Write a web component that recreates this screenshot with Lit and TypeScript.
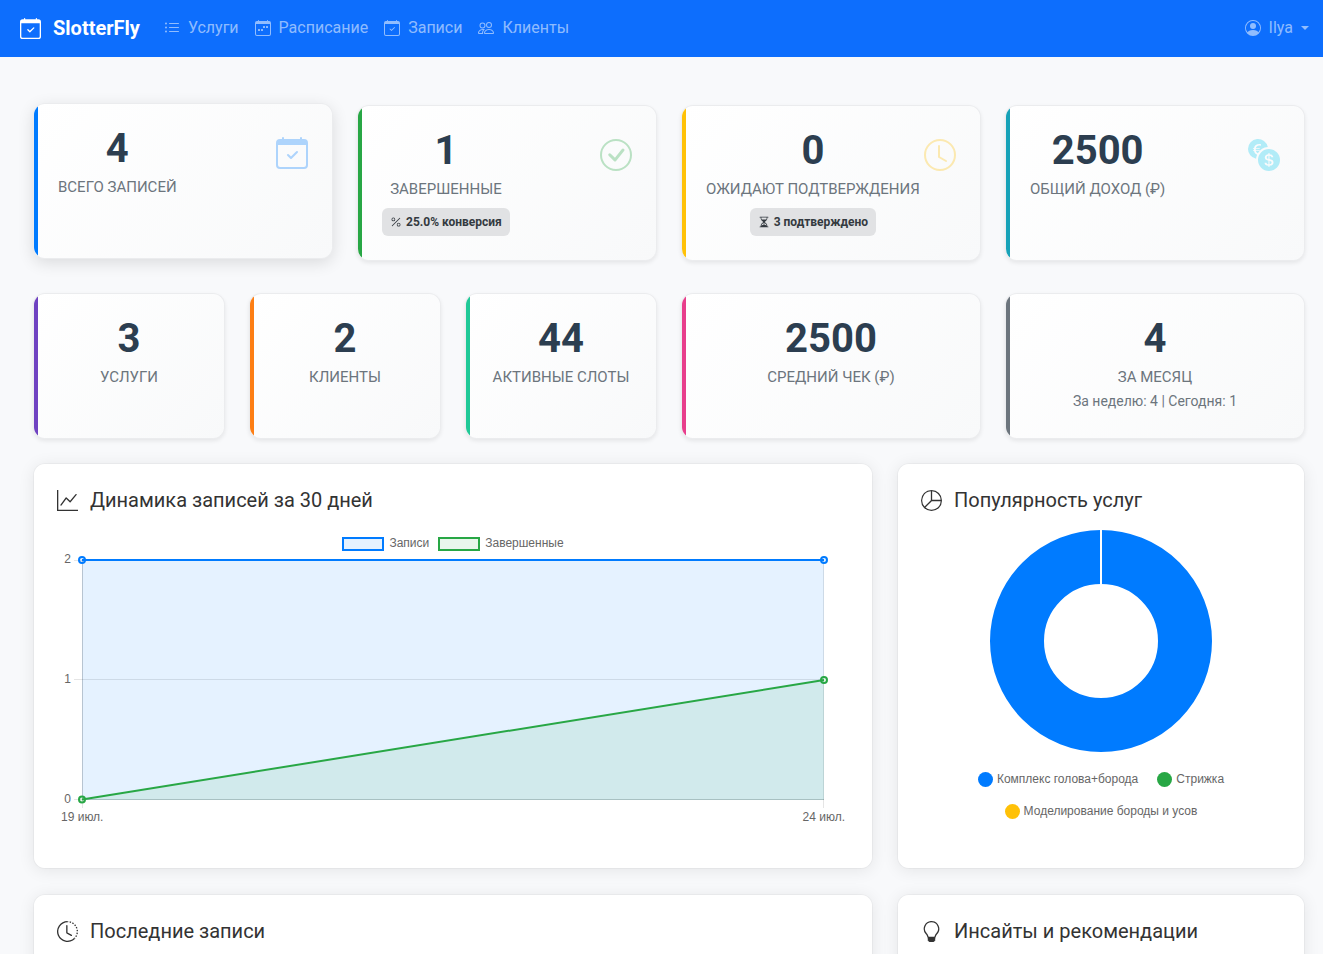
import { LitElement, html, svg, css } from "lit";
import { customElement } from "lit/decorators.js";
import { classMap } from "lit/directives/class-map.js";

type Icon = { d: string[]; evenodd?: boolean };

const ICONS: Record<string, Icon> = {
  calendarCheck: { d: [
    "M10.854 7.146a.5.5 0 0 1 0 .708l-3 3a.5.5 0 0 1-.708 0l-1.5-1.5a.5.5 0 1 1 .708-.708L7.5 9.793l2.646-2.647a.5.5 0 0 1 .708 0z",
    "M3.5 0a.5.5 0 0 1 .5.5V1h8V.5a.5.5 0 0 1 1 0V1h1a2 2 0 0 1 2 2v11a2 2 0 0 1-2 2H2a2 2 0 0 1-2-2V3a2 2 0 0 1 2-2h1V.5a.5.5 0 0 1 .5-.5zM1 4v10a1 1 0 0 0 1 1h12a1 1 0 0 0 1-1V4H1z",
  ] },
  calendarWeek: { d: [
    "M11 6.5a.5.5 0 0 1 .5-.5h1a.5.5 0 0 1 .5.5v1a.5.5 0 0 1-.5.5h-1a.5.5 0 0 1-.5-.5v-1zm-3 0a.5.5 0 0 1 .5-.5h1a.5.5 0 0 1 .5.5v1a.5.5 0 0 1-.5.5h-1a.5.5 0 0 1-.5-.5v-1zm-5 3a.5.5 0 0 1 .5-.5h1a.5.5 0 0 1 .5.5v1a.5.5 0 0 1-.5.5h-1a.5.5 0 0 1-.5-.5v-1zm3 0a.5.5 0 0 1 .5-.5h1a.5.5 0 0 1 .5.5v1a.5.5 0 0 1-.5.5h-1a.5.5 0 0 1-.5-.5v-1z",
    "M3.5 0a.5.5 0 0 1 .5.5V1h8V.5a.5.5 0 0 1 1 0V1h1a2 2 0 0 1 2 2v11a2 2 0 0 1-2 2H2a2 2 0 0 1-2-2V3a2 2 0 0 1 2-2h1V.5a.5.5 0 0 1 .5-.5zM1 4v10a1 1 0 0 0 1 1h12a1 1 0 0 0 1-1V4H1z",
  ] },
  list: { d: [
    "M5 11.5a.5.5 0 0 1 .5-.5h9a.5.5 0 0 1 0 1h-9a.5.5 0 0 1-.5-.5zm0-4a.5.5 0 0 1 .5-.5h9a.5.5 0 0 1 0 1h-9a.5.5 0 0 1-.5-.5zm0-4a.5.5 0 0 1 .5-.5h9a.5.5 0 0 1 0 1h-9a.5.5 0 0 1-.5-.5zm-3 1a1 1 0 1 0 0-2 1 1 0 0 0 0 2zm0 4a1 1 0 1 0 0-2 1 1 0 0 0 0 2zm0 4a1 1 0 1 0 0-2 1 1 0 0 0 0 2z",
  ], evenodd: true },
  people: { d: [
    "M15 14s1 0 1-1-1-4-5-4-5 3-5 4 1 1 1 1h8Zm-7.978-1A.261.261 0 0 1 7 12.996c.001-.264.167-1.03.76-1.72C8.312 10.629 9.282 10 11 10c1.717 0 2.687.63 3.24 1.276.593.69.758 1.457.76 1.72l-.008.002a.274.274 0 0 1-.014.002H7.022ZM11 7a2 2 0 1 0 0-4 2 2 0 0 0 0 4Zm3-2a3 3 0 1 1-6 0 3 3 0 0 1 6 0ZM6.936 9.28a5.88 5.88 0 0 0-1.23-.247A7.35 7.35 0 0 0 5 9c-4 0-5 3-5 4 0 .667.333 1 1 1h4.216A2.238 2.238 0 0 1 5 13c0-1.01.377-2.042 1.09-2.904.243-.294.526-.569.846-.816ZM4.92 10A5.493 5.493 0 0 0 4 13H1c0-.26.164-1.03.76-1.724.545-.636 1.492-1.256 3.16-1.275ZM1.5 5.5a3 3 0 1 1 6 0 3 3 0 0 1-6 0Zm3-2a2 2 0 1 0 0 4 2 2 0 0 0 0-4Z",
  ] },
  person: { d: [
    "M11 6a3 3 0 1 1-6 0 3 3 0 0 1 6 0z",
    "M0 8a8 8 0 1 1 16 0A8 8 0 0 1 0 8zm8-7a7 7 0 0 0-5.468 11.37C3.242 11.226 4.805 10 8 10s4.757 1.225 5.468 2.37A7 7 0 0 0 8 1z",
  ], evenodd: true },
  checkCircle: { d: [
    "M8 15A7 7 0 1 1 8 1a7 7 0 0 1 0 14zm0 1A8 8 0 1 0 8 0a8 8 0 0 0 0 16z",
    "M10.97 4.97a.235.235 0 0 0-.02.022L7.477 9.417 5.384 7.323a.75.75 0 0 0-1.06 1.06L6.97 11.03a.75.75 0 0 0 1.079-.02l3.992-4.99a.75.75 0 0 0-1.071-1.05z",
  ] },
  clock: { d: [
    "M8 3.5a.5.5 0 0 0-1 0V9a.5.5 0 0 0 .252.434l3.5 2a.5.5 0 0 0 .496-.868L8 8.71V3.5z",
    "M8 16A8 8 0 1 0 8 0a8 8 0 0 0 0 16zm7-8A7 7 0 1 1 1 8a7 7 0 0 1 14 0z",
  ] },
  exchange: { d: [
    "M0 5a5.002 5.002 0 0 0 4.027 4.905 6.46 6.46 0 0 1 .544-2.073C3.695 7.536 3.132 6.864 3 5.91h-.5v-.426h.466V5.05c0-.046 0-.093.004-.135H2.5v-.427h.511C3.236 3.24 4.213 2.5 5.681 2.5c.316 0 .59.031.819.085v.733a3.46 3.46 0 0 0-.815-.082c-.919 0-1.538.466-1.734 1.252h1.917v.427h-1.98c-.003.046-.003.097-.003.147v.422h1.983v.427H3.93c.118.602.468 1.03 1.005 1.229a6.5 6.5 0 0 1 4.97-3.113A5.002 5.002 0 0 0 0 5zm16 5.5a5.5 5.5 0 1 1-11 0 5.5 5.5 0 0 1 11 0zm-7.75 1.322c.069.835.746 1.485 1.964 1.562V14h.54v-.62c1.259-.086 1.996-.74 1.996-1.69 0-.865-.563-1.31-1.57-1.54l-.426-.1V8.374c.54.06.884.347.966.745h.948c-.07-.804-.779-1.433-1.914-1.502V7h-.54v.629c-1.076.103-1.808.732-1.808 1.622 0 .787.544 1.288 1.45 1.493l.358.085v1.78c-.554-.08-.92-.376-1.003-.787H8.25zm1.96-1.895c-.532-.12-.82-.364-.82-.732 0-.41.311-.719.824-.809v1.54h-.005zm.622 1.044c.645.145.943.38.943.796 0 .474-.37.8-1.02.86v-1.674l.077.018z",
  ] },
  percent: { d: [
    "M13.442 2.558a.625.625 0 0 1 0 .884l-10 10a.625.625 0 1 1-.884-.884l10-10a.625.625 0 0 1 .884 0zM4.5 6a1.5 1.5 0 1 1 0-3 1.5 1.5 0 0 1 0 3zm0 1a2.5 2.5 0 1 0 0-5 2.5 2.5 0 0 0 0 5zm7 6a1.5 1.5 0 1 1 0-3 1.5 1.5 0 0 1 0 3zm0 1a2.5 2.5 0 1 0 0-5 2.5 2.5 0 0 0 0 5z",
  ] },
  hourglass: { d: [
    "M2.5 15a.5.5 0 1 1 0-1h1v-1a4.5 4.5 0 0 1 2.557-4.06c.29-.139.443-.377.443-.59v-.7c0-.213-.154-.451-.443-.59A4.5 4.5 0 0 1 3.5 3V2h-1a.5.5 0 0 1 0-1h11a.5.5 0 0 1 0 1h-1v1a4.5 4.5 0 0 1-2.557 4.06c-.29.139-.443.377-.443.59v.7c0 .213.154.451.443.59A4.5 4.5 0 0 1 12.5 13v1h1a.5.5 0 0 1 0 1h-11zm2-13v1c0 .537.12 1.045.337 1.5h6.326c.216-.455.337-.963.337-1.5V2h-7zm3 6.35c0 .701-.478 1.236-1.011 1.492A3.5 3.5 0 0 0 4.5 13s.866-1.299 3-1.48V8.35zm1 0v3.17c2.134.181 3 1.48 3 1.48a3.5 3.5 0 0 0-1.989-3.158C8.978 9.586 8.5 9.052 8.5 8.351z",
  ] },
  graph: { d: [
    "M0 0h1v15h15v1H0V0Zm14.817 3.113a.5.5 0 0 1 .07.704l-4.5 5.5a.5.5 0 0 1-.74.037L7.06 6.767l-3.656 5.027a.5.5 0 0 1-.808-.588l4-5.5a.5.5 0 0 1 .758-.06l2.609 2.61 4.15-5.073a.5.5 0 0 1 .704-.07Z",
  ], evenodd: true },
  pie: { d: [
    "M7.5 1.018a7 7 0 0 0-4.79 11.566L7.5 7.793V1.018zm1 0V7.5h6.482A7.001 7.001 0 0 0 8.5 1.018zM14.982 8.5H8.207l-4.79 4.79A7 7 0 0 0 14.982 8.5zM0 8a8 8 0 1 1 16 0A8 8 0 0 1 0 8z",
  ], evenodd: true },
  history: { d: [
    "M8.515 1.019A7 7 0 0 0 8 1V0a8 8 0 0 1 .589.022l-.074.997zm2.004.45a7.003 7.003 0 0 0-.985-.299l.219-.976c.383.086.76.2 1.126.342l-.36.933zm1.37.71a7.01 7.01 0 0 0-.439-.27l.493-.87a8.025 8.025 0 0 1 .979.654l-.615.789a6.996 6.996 0 0 0-.418-.302zm1.834 1.79a6.99 6.99 0 0 0-.653-.796l.724-.69c.27.285.52.59.747.91l-.818.576zm.744 1.352a7.08 7.08 0 0 0-.214-.468l.893-.45a7.976 7.976 0 0 1 .45 1.088l-.95.313a7.023 7.023 0 0 0-.179-.483zm.53 2.507a6.991 6.991 0 0 0-.1-1.025l.985-.17c.067.386.106.778.116 1.17l-1 .025zm-.131 1.538c.033-.17.06-.339.081-.51l.993.123a7.957 7.957 0 0 1-.23 1.155l-.964-.267c.046-.165.086-.332.12-.501zm-.952 2.379c.184-.29.346-.594.486-.908l.914.405c-.16.36-.345.706-.555 1.038l-.845-.535zm-.964 1.205c.122-.122.239-.248.35-.378l.758.653a8.073 8.073 0 0 1-.401.432l-.707-.707z",
    "M8 1a7 7 0 1 0 4.95 11.95l.707.707A8.001 8.001 0 1 1 8 0v1z",
    "M7.5 3a.5.5 0 0 1 .5.5v5.21l3.248 1.856a.5.5 0 0 1-.496.868l-3.5-2A.5.5 0 0 1 7 9V3.5a.5.5 0 0 1 .5-.5z",
  ] },
  bulb: { d: [
    "M2 6a6 6 0 1 1 10.174 4.31c-.203.196-.359.4-.453.619l-.762 1.769A.5.5 0 0 1 10.5 13a.5.5 0 0 1 0 1 .5.5 0 0 1 0 1l-.224.447a1 1 0 0 1-.894.553H6.618a1 1 0 0 1-.894-.553L5.5 15a.5.5 0 0 1 0-1 .5.5 0 0 1 0-1 .5.5 0 0 1-.46-.302l-.761-1.77a1.964 1.964 0 0 0-.453-.618A5.984 5.984 0 0 1 2 6zm6-5a5 5 0 0 0-3.479 8.592c.263.254.514.564.676.941L5.83 12h4.342l.632-1.467c.162-.377.413-.687.676-.941A5 5 0 0 0 8 1z",
  ] },
};

const icon = (name: string, cls: string) => {
  const { d, evenodd } = ICONS[name];
  return html`<svg class=${cls} viewBox="0 0 16 16" fill="currentColor" aria-hidden="true">
    ${d.map((p) => svg`<path fill-rule=${evenodd ? "evenodd" : "nonzero"} d=${p}></path>`)}
  </svg>`;
};

const NAV = [
  { icon: "list", text: "Услуги", href: "#services" },
  { icon: "calendarWeek", text: "Расписание", href: "#schedule" },
  { icon: "calendarCheck", text: "Записи", href: "#bookings" },
  { icon: "people", text: "Клиенты", href: "#clients" },
];

type Stat = {
  value: string; label: string; tone: string; icon?: string;
  badge?: { icon: string; text: string }; note?: string; raised?: boolean; wide?: boolean;
};

const MAIN_STATS: Stat[] = [
  { value: "4", label: "Всего записей", tone: "blue", icon: "calendarCheck", raised: true },
  { value: "1", label: "Завершенные", tone: "green", icon: "checkCircle", badge: { icon: "percent", text: "25.0% конверсия" } },
  { value: "0", label: "Ожидают подтверждения", tone: "yellow", icon: "clock", badge: { icon: "hourglass", text: "3 подтверждено" } },
  { value: "2500", label: "Общий доход (₽)", tone: "cyan", icon: "exchange" },
];

const EXTRA_STATS: Stat[] = [
  { value: "3", label: "Услуги", tone: "purple" },
  { value: "2", label: "Клиенты", tone: "orange" },
  { value: "44", label: "Активные слоты", tone: "teal" },
  { value: "2500", label: "Средний чек (₽)", tone: "pink", wide: true },
  { value: "4", label: "За месяц", tone: "gray", wide: true, note: "За неделю: 4 | Сегодня: 1" },
];

@customElement("site-nav")
export class SiteNav extends LitElement {
  static styles = css`
    :host { display: block; }
    .bar {
      display: flex; align-items: center; height: 57px; padding: 0 14px 1px 20px;
      box-sizing: border-box; background: #0d6efd;
      font: 16px/24px Roboto, sans-serif;
    }
    a { text-decoration: none; }
    .brand { display: flex; align-items: center; gap: 12px; color: #fff; font-size: 20px; font-weight: 700; margin-right: 24px; }
    .brand-icon { width: 21px; height: 21px; }
    .links { display: flex; gap: 16px; flex: 1; margin: 0; padding: 0; list-style: none; }
    .link, .user { display: flex; align-items: center; gap: 8px; color: rgba(255, 255, 255, 0.55); }
    .user { border: 0; padding: 0; background: none; font: inherit; cursor: pointer; }
    .icon { width: 16px; height: 16px; }
    .caret { border: 4px solid transparent; border-top-color: currentColor; border-bottom: 0; }
  `;
  render() {
    return html`<nav class="bar">
      <a class="brand" href="#home">${icon("calendarCheck", "brand-icon")}<span>SlotterFly</span></a>
      <ul class="links">
        ${NAV.map((n) => html`<li><a class="link" href=${n.href}>${icon(n.icon, "icon")}<span>${n.text}</span></a></li>`)}
      </ul>
      <button class="user" type="button" aria-haspopup="true">
        ${icon("person", "icon")}<span>Ilya</span><span class="caret"></span>
      </button>
    </nav>`;
  }
}

@customElement("line-chart")
export class LineChart extends LitElement {
  static styles = css`
    :host { display: block; font: 12px/14px "Liberation Sans", Arial, sans-serif; color: #666; }
    .legend { display: flex; justify-content: center; gap: 9px; padding: 9px 0; }
    .item { display: flex; align-items: center; gap: 5px; height: 14px; }
    .name { margin-top: -2px; }
    .swatch { width: 42px; height: 14px; box-sizing: border-box; border: 2px solid; }
    .all { border-color: #007bff; background: rgba(0, 123, 255, 0.1); }
    .done { border-color: #28a745; background: rgba(40, 167, 69, 0.1); }
    .body { display: grid; grid-template-columns: 25px 1fr 25px; }
    .y { display: flex; flex-direction: column; justify-content: space-between; margin: -8px 11px -6px 0; text-align: right; }
    .plot { display: block; width: 100%; height: 240px; overflow: visible; }
    .x { display: flex; justify-content: space-between; padding: 10px 4px 20px; }
    .grid { stroke: rgba(0, 0, 0, 0.1); }
    .axis { stroke: rgba(0, 0, 0, 0.2); }
    .line { stroke-width: 2; }
    .s-all { stroke: #007bff; fill: rgba(0, 123, 255, 0.1); }
    .s-done { stroke: #28a745; fill: rgba(40, 167, 69, 0.1); }
    .area { stroke: none; }
  `;
  render() {
    return html`
      <div class="legend">
        <div class="item"><span class="swatch all"></span><span class="name">Записи</span></div>
        <div class="item"><span class="swatch done"></span><span class="name">Завершенные</span></div>
      </div>
      <div class="body">
        <div class="y"><span>2</span><span>1</span><span>0</span></div>
        <svg class="plot" role="img" aria-label="Динамика записей за 30 дней">
          <line class="grid" x1="-8" y1="0.5" x2="100%" y2="0.5"></line>
          <line class="grid" x1="-8" y1="119.5" x2="100%" y2="119.5"></line>
          <line class="grid" x1="-8" y1="239.5" x2="0" y2="239.5"></line>
          <line class="axis" x1="0" y1="239.5" x2="100%" y2="239.5"></line>
          <line class="axis" x1="0.5" y1="0" x2="0.5" y2="240"></line>
          <line class="grid" x1="0.5" y1="240" x2="0.5" y2="248"></line>
          <svg width="100%" height="248" viewBox="0 0 742 248" preserveAspectRatio="xMaxYMin">
            <line class="grid" x1="741.5" y1="0" x2="741.5" y2="248"></line>
          </svg>
          <rect class="s-all area" x="0" y="0" width="100%" height="240"></rect>
          <svg width="100%" height="240" viewBox="0 0 100 100" preserveAspectRatio="none">
            <path class="s-done area" d="M0 100 100 50V100Z"></path>
          </svg>
          <line class="s-all line" x1="0" y1="0" x2="100%" y2="0"></line>
          <line class="s-done line" x1="0" y1="239.5" x2="100%" y2="120"></line>
          <circle class="s-all line" cx="0" cy="0" r="3"></circle>
          <circle class="s-all line" cx="100%" cy="0" r="3"></circle>
          <circle class="s-done line" cx="0" cy="239.5" r="3"></circle>
          <circle class="s-done line" cx="100%" cy="120" r="3"></circle>
        </svg>
      </div>
      <div class="x"><span>19 июл.</span><span>24 июл.</span></div>
    `;
  }
}

@customElement("donut-chart")
export class DonutChart extends LitElement {
  static styles = css`
    :host { display: block; padding-top: 2px; font: 12px/14px "Liberation Sans", Arial, sans-serif; color: #666; }
    .ring { display: block; width: 222px; height: 222px; margin: 0 auto; }
    .legend { display: flex; flex-wrap: wrap; justify-content: center; gap: 17px 19px; padding: 20px 40px 0; }
    .item { display: flex; align-items: center; gap: 4px; height: 15px; }
    .name { margin-top: -2px; }
    .dot { width: 15px; height: 15px; border-radius: 50%; }
    .blue { background: #007bff; }
    .green { background: #28a745; }
    .yellow { background: #ffc107; }
  `;
  render() {
    return html`
      <svg class="ring" viewBox="0 0 222 222" role="img" aria-label="Популярность услуг">
        <circle cx="111" cy="111" r="84" fill="none" stroke="#007bff" stroke-width="54"></circle>
        <line x1="111" y1="0" x2="111" y2="55" stroke="#fff" stroke-width="2"></line>
      </svg>
      <div class="legend">
        <div class="item"><span class="dot blue"></span><span class="name">Комплекс голова+борода</span></div>
        <div class="item"><span class="dot green"></span><span class="name">Стрижка</span></div>
        <div class="item"><span class="dot yellow"></span><span class="name">Моделирование бороды и усов</span></div>
      </div>
    `;
  }
}

@customElement("app-root")
export class AppRoot extends LitElement {
  static styles = css`
    :host {
      display: block; height: 100vh; overflow: hidden; background: #f8f9fb;
      font: 14px/21px Roboto, sans-serif; color: #333;
    }
    .page { padding: 48px 18px 24px 33px; }
    .grid { display: grid; grid-template-columns: repeat(12, minmax(0, 1fr)); gap: 24px; }
    .main { margin-bottom: 32px; }
    .extra { margin-bottom: 24px; }
    .panels { margin-bottom: 25px; }
    .stat {
      grid-column: span 2; position: relative; overflow: hidden; box-sizing: border-box;
      padding: 24px; border: 1px solid rgba(0, 0, 0, 0.05); border-radius: 12px;
      background: linear-gradient(135deg, #fff 0%, #f8f9fa 100%);
      background-clip: padding-box;
      box-shadow: 0 2px 4px rgba(0, 0, 0, 0.08);
      display: flex; justify-content: center; align-items: flex-start;
    }
    .stat::before { content: ""; position: absolute; left: 0; top: 0; bottom: 0; width: 4px; background: var(--tone); }
    .wide { grid-column: span 3; }
    .with-icon { justify-content: space-between; }
    .raised { transform: translateY(-2px); box-shadow: 0 4px 16px rgba(0, 0, 0, 0.12); }
    .blue { --tone: #007bff; --soft: #007bff; }
    .green { --tone: #28a745; --soft: #28a745; }
    .yellow { --tone: #ffc107; --soft: #ffc107; }
    .cyan { --tone: #17a2b8; --soft: #0dcaf0; }
    .purple { --tone: #6f42c1; }
    .orange { --tone: #fd7e14; }
    .teal { --tone: #20c997; }
    .pink { --tone: #e83e8c; }
    .gray { --tone: #6c757d; }
    .text { text-align: center; white-space: nowrap; }
    .value { font-size: 40px; line-height: 42px; font-weight: 700; color: #2c3e50; margin-bottom: 6px; }
    .label { font-size: 15px; line-height: 22px; text-transform: uppercase; color: #6c757d; }
    .note { margin: 3px 0 2px; color: #6c757d; }
    .badge {
      display: inline-flex; align-items: center; gap: 4px; height: 28px; padding: 0 8px; margin-top: 8px;
      box-sizing: border-box; border-radius: 6px; background: #e1e2e4;
      font-size: 12px; line-height: 14px; font-weight: 700; color: #343a40; vertical-align: top;
    }
    .badge-icon { width: 12px; height: 12px; }
    .stat-icon { width: 32px; height: 32px; margin: 9px 0; flex: none; color: var(--soft); opacity: 0.3; }
    .panel {
      grid-column: span 4; box-sizing: border-box; padding: 24px 23px; border-radius: 12px; background: #fff;
      border: 1px solid rgba(0, 0, 0, 0.03); background-clip: padding-box;
      box-shadow: 0 2px 16px rgba(0, 0, 0, 0.08); min-width: 0;
    }
    .big { grid-column: span 8; }
    .tall { min-height: 406px; }
    .title { display: flex; align-items: center; gap: 12px; margin: 0 0 16px; font-size: 20px; line-height: 24px; font-weight: 400; color: #333; }
    .title-icon { width: 21px; height: 21px; }
  `;

  private stat(s: Stat) {
    const cls = { stat: true, [s.tone]: true, wide: !!(s.icon || s.wide), "with-icon": !!s.icon, raised: !!s.raised };
    return html`<article class=${classMap(cls)}>
      <div class="text">
        <div class="value">${s.value}</div>
        <div class="label">${s.label}</div>
        ${s.note ? html`<div class="note">${s.note}</div>` : ""}
        ${s.badge ? html`<span class="badge">${icon(s.badge.icon, "badge-icon")}<span>${s.badge.text}</span></span>` : ""}
      </div>
      ${s.icon ? icon(s.icon, "stat-icon") : ""}
    </article>`;
  }

  private title(name: string, text: string) {
    return html`<h5 class="title">${icon(name, "title-icon")}<span>${text}</span></h5>`;
  }

  render() {
    return html`
      <site-nav></site-nav>
      <main class="page">
        <section class="grid main">${MAIN_STATS.map((s) => this.stat(s))}</section>
        <section class="grid extra">${EXTRA_STATS.map((s) => this.stat(s))}</section>
        <section class="grid panels">
          <article class="panel big tall">${this.title("graph", "Динамика записей за 30 дней")}<line-chart></line-chart></article>
          <article class="panel tall">${this.title("pie", "Популярность услуг")}<donut-chart></donut-chart></article>
        </section>
        <section class="grid">
          <article class="panel big">${this.title("history", "Последние записи")}</article>
          <article class="panel">${this.title("bulb", "Инсайты и рекомендации")}</article>
        </section>
      </main>
    `;
  }
}
